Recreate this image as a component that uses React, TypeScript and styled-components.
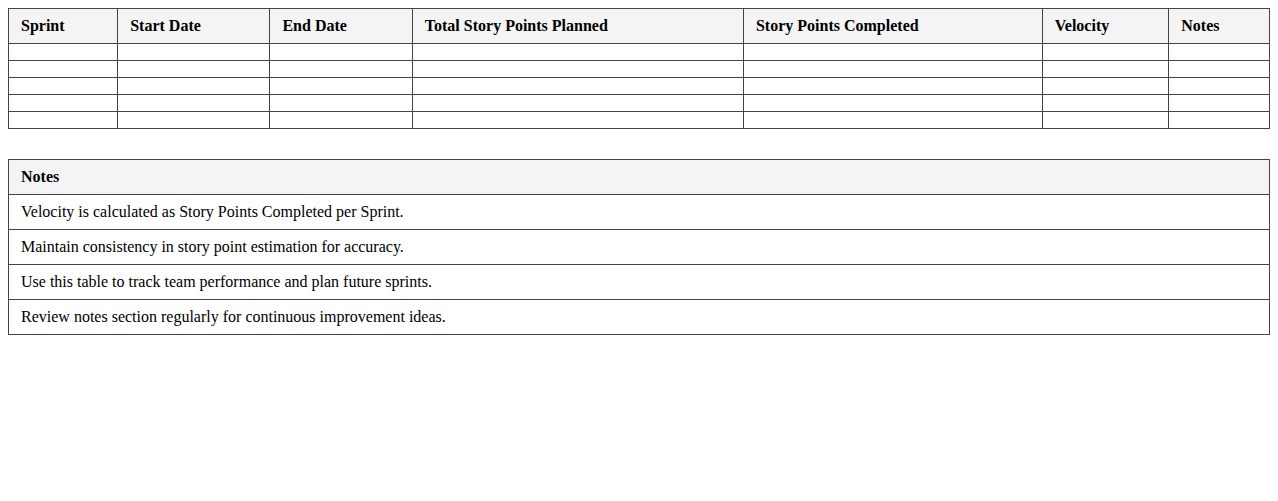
import React from "react";
import styled, { createGlobalStyle } from "styled-components";

const Global = createGlobalStyle`
  body {
    margin: 8px;
    font-family: "Liberation Serif", "Times New Roman", serif;
    font-size: 16px;
    color: #000;
    background: #fff;
  }
`;

const Page = styled.div`
  display: flex;
  flex-direction: column;
  gap: 30px;
`;

const Table = styled.table`
  width: 100%;
  border-collapse: collapse;
`;

const Th = styled.th`
  border: 1px solid #444;
  background: #f4f4f4;
  padding: 8px 12px;
  text-align: left;
  font-weight: bold;
`;

const Td = styled.td<{ $empty?: boolean }>`
  border: 1px solid #444;
  padding: 8px 12px;
  text-align: left;
  height: ${(p) => (p.$empty ? "0" : "auto")};
`;

const headers = [
  "Sprint",
  "Start Date",
  "End Date",
  "Total Story Points Planned",
  "Story Points Completed",
  "Velocity",
  "Notes",
];

const notes = [
  "Velocity is calculated as Story Points Completed per Sprint.",
  "Maintain consistency in story point estimation for accuracy.",
  "Use this table to track team performance and plan future sprints.",
  "Review notes section regularly for continuous improvement ideas.",
];

export default function App() {
  return (
    <>
      <Global />
      <Page>
        <Table>
          <thead>
            <tr>
              {headers.map((h) => (
                <Th key={h}>{h}</Th>
              ))}
            </tr>
          </thead>
          <tbody>
            {[0, 1, 2, 3, 4].map((r) => (
              <tr key={r}>
                {headers.map((h) => (
                  <Td key={h} $empty />
                ))}
              </tr>
            ))}
          </tbody>
        </Table>
        <Table>
          <thead>
            <tr>
              <Th>Notes</Th>
            </tr>
          </thead>
          <tbody>
            {notes.map((n) => (
              <tr key={n}>
                <Td>{n}</Td>
              </tr>
            ))}
          </tbody>
        </Table>
      </Page>
    </>
  );
}
